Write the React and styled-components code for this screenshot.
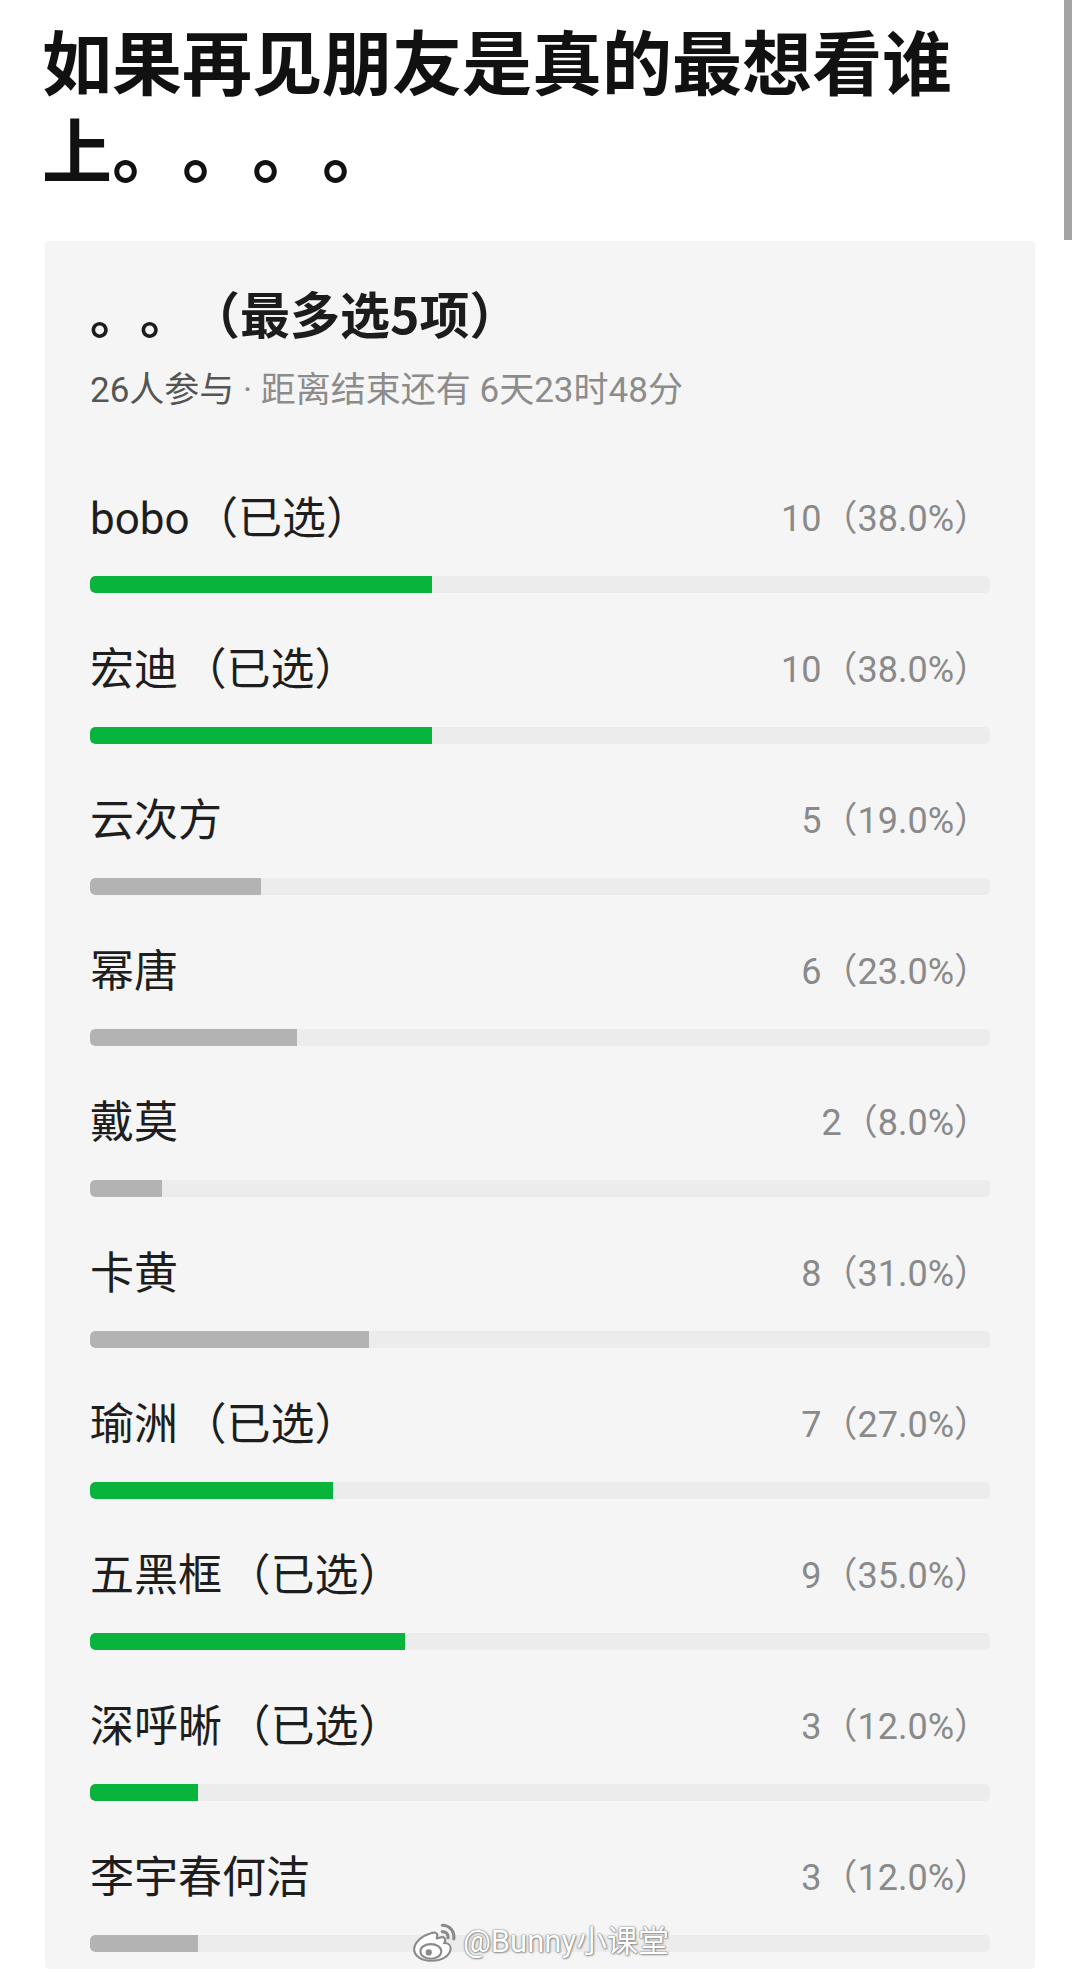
import React from "react";
import styled, { createGlobalStyle } from "styled-components";

const GlobalStyle = createGlobalStyle`
  html, body { margin: 0; padding: 0; background: #ffffff; }
  body {
    font-family: Roboto, "Noto Sans CJK SC", "Noto Sans", sans-serif;
    text-spacing-trim: space-all;
  }
`;

const Page = styled.div`
  position: relative;
  width: 1080px;
  min-height: 1972px;
  background: #ffffff;
  overflow: hidden;
  text-spacing-trim: space-all;
`;

const Scrollbar = styled.div`
  position: absolute;
  top: 0;
  right: 8px;
  width: 8px;
  height: 240px;
  background: #a4a4a4;
`;

const Title = styled.h1`
  margin: 0;
  padding: 16px 100px 0 42px;
  font-family: "Noto Sans CJK SC", sans-serif;
  font-size: 70px;
  line-height: 88px;
  font-weight: 700;
  color: #111111;
  text-spacing-trim: space-all;
`;

const Card = styled.section`
  margin: 49px 0 0 45px;
  width: 990px;
  box-sizing: border-box;
  padding: 39px 45px 17px 45px;
  background: #f5f5f5;
  border-radius: 4px;
`;

const PollTitle = styled.div`
  font-family: "Noto Sans CJK SC", sans-serif;
  font-size: 50px;
  line-height: 64px;
  font-weight: 700;
  color: #1c1c1c;
  text-spacing-trim: space-all;
`;

const Meta = styled.div`
  margin-top: 22px;
  font-size: 35px;
  line-height: 50px;
  color: #8c8c8c;
  white-space: nowrap;
`;

const MetaStrong = styled.span`
  color: #555555;
`;

const OptionList = styled.div`
  margin-top: 73px;
  display: flex;
  flex-direction: column;
  gap: 47px;
`;

const Option = styled.div`
  display: flex;
  flex-direction: column;
  gap: 27px;
`;

const OptionHead = styled.div`
  display: flex;
  justify-content: space-between;
  align-items: center;
  height: 60px;
`;

const Label = styled.span`
  font-size: 44px;
  line-height: 60px;
  color: #1e1e1e;
  white-space: pre;
`;

const Count = styled.span`
  font-size: 36px;
  line-height: 60px;
  color: #8a8a8a;
`;

const Track = styled.div`
  height: 17px;
  border-radius: 5px;
  background: #ececec;
  overflow: hidden;
`;

const Fill = styled.div`
  height: 100%;
  border-radius: 5px 0 0 5px;
  background: ${(p) => (p.$selected ? "#08b43c" : "#b3b3b3")};
`;

const Watermark = styled.div`
  position: absolute;
  left: 0;
  right: 0;
  top: 1921px;
  display: flex;
  justify-content: center;
  align-items: center;
  gap: 4px;
  pointer-events: none;
`;

const WatermarkText = styled.span`
  font-family: Roboto, "Noto Sans CJK SC", sans-serif;
  font-size: 31px;
  line-height: 40px;
  color: #ffffff;
  text-shadow: 0 0 1px #6f6f6f, 0 0 2px #7a7a7a, 1px 1px 2px rgba(0, 0, 0, 0.35);
`;

const WeiboLogo = () => (
  <svg width="48" height="42" viewBox="0 0 46 40" fill="none">
    <path
      d="M18 12 C10 14 3 21 3 27 C3 34 11 38 20 38 C31 38 38 32 38 26 C38 22 34 21 32 21 C34 17 32 14 27 16 C25 17 24 17 25 15 C26 11 23 10 18 12 Z"
      fill="#ffffff"
      stroke="#8a8a8a"
      strokeWidth="2"
    />
    <ellipse cx="19" cy="29" rx="10" ry="7" fill="#ffffff" stroke="#8a8a8a" strokeWidth="2" />
    <circle cx="17" cy="30" r="3" fill="#8a8a8a" />
    <path d="M30 4 C37 4 42 10 41 17" stroke="#8a8a8a" strokeWidth="3" strokeLinecap="round" fill="none" />
    <path d="M30 10 C34 10 36 13 35.5 16" stroke="#8a8a8a" strokeWidth="3" strokeLinecap="round" fill="none" />
  </svg>
);

const options = [
  { name: "bobo", selected: true, count: 10, pct: 38.0 },
  { name: "宏迪", selected: true, count: 10, pct: 38.0 },
  { name: "云次方", selected: false, count: 5, pct: 19.0 },
  { name: "幂唐", selected: false, count: 6, pct: 23.0 },
  { name: "戴莫", selected: false, count: 2, pct: 8.0 },
  { name: "卡黄", selected: false, count: 8, pct: 31.0 },
  { name: "瑜洲", selected: true, count: 7, pct: 27.0 },
  { name: "五黑框", selected: true, count: 9, pct: 35.0 },
  { name: "深呼晰", selected: true, count: 3, pct: 12.0 },
  { name: "李宇春何洁", selected: false, count: 3, pct: 12.0 },
];

export default function App() {
  return (
    <Page>
      <GlobalStyle />
      <Scrollbar />
      <Title>如果再见朋友是真的最想看谁上。。。。</Title>
      <Card>
        <PollTitle>。。（最多选5项）</PollTitle>
        <Meta>
          <MetaStrong>26人参与</MetaStrong> · 距离结束还有 6天23时48分
        </Meta>
        <OptionList>
          {options.map((o) => (
            <Option key={o.name}>
              <OptionHead>
                <Label>
                  {o.name}
                  {o.selected ? "\u200a（已选）" : ""}
                </Label>
                <Count>
                  {o.count}（{o.pct.toFixed(1)}%）
                </Count>
              </OptionHead>
              <Track>
                <Fill $selected={o.selected} style={{ width: `${o.pct}%` }} />
              </Track>
            </Option>
          ))}
        </OptionList>
      </Card>
      <Watermark>
        <WeiboLogo />
        <WatermarkText>@Bunny小课堂</WatermarkText>
      </Watermark>
    </Page>
  );
}
